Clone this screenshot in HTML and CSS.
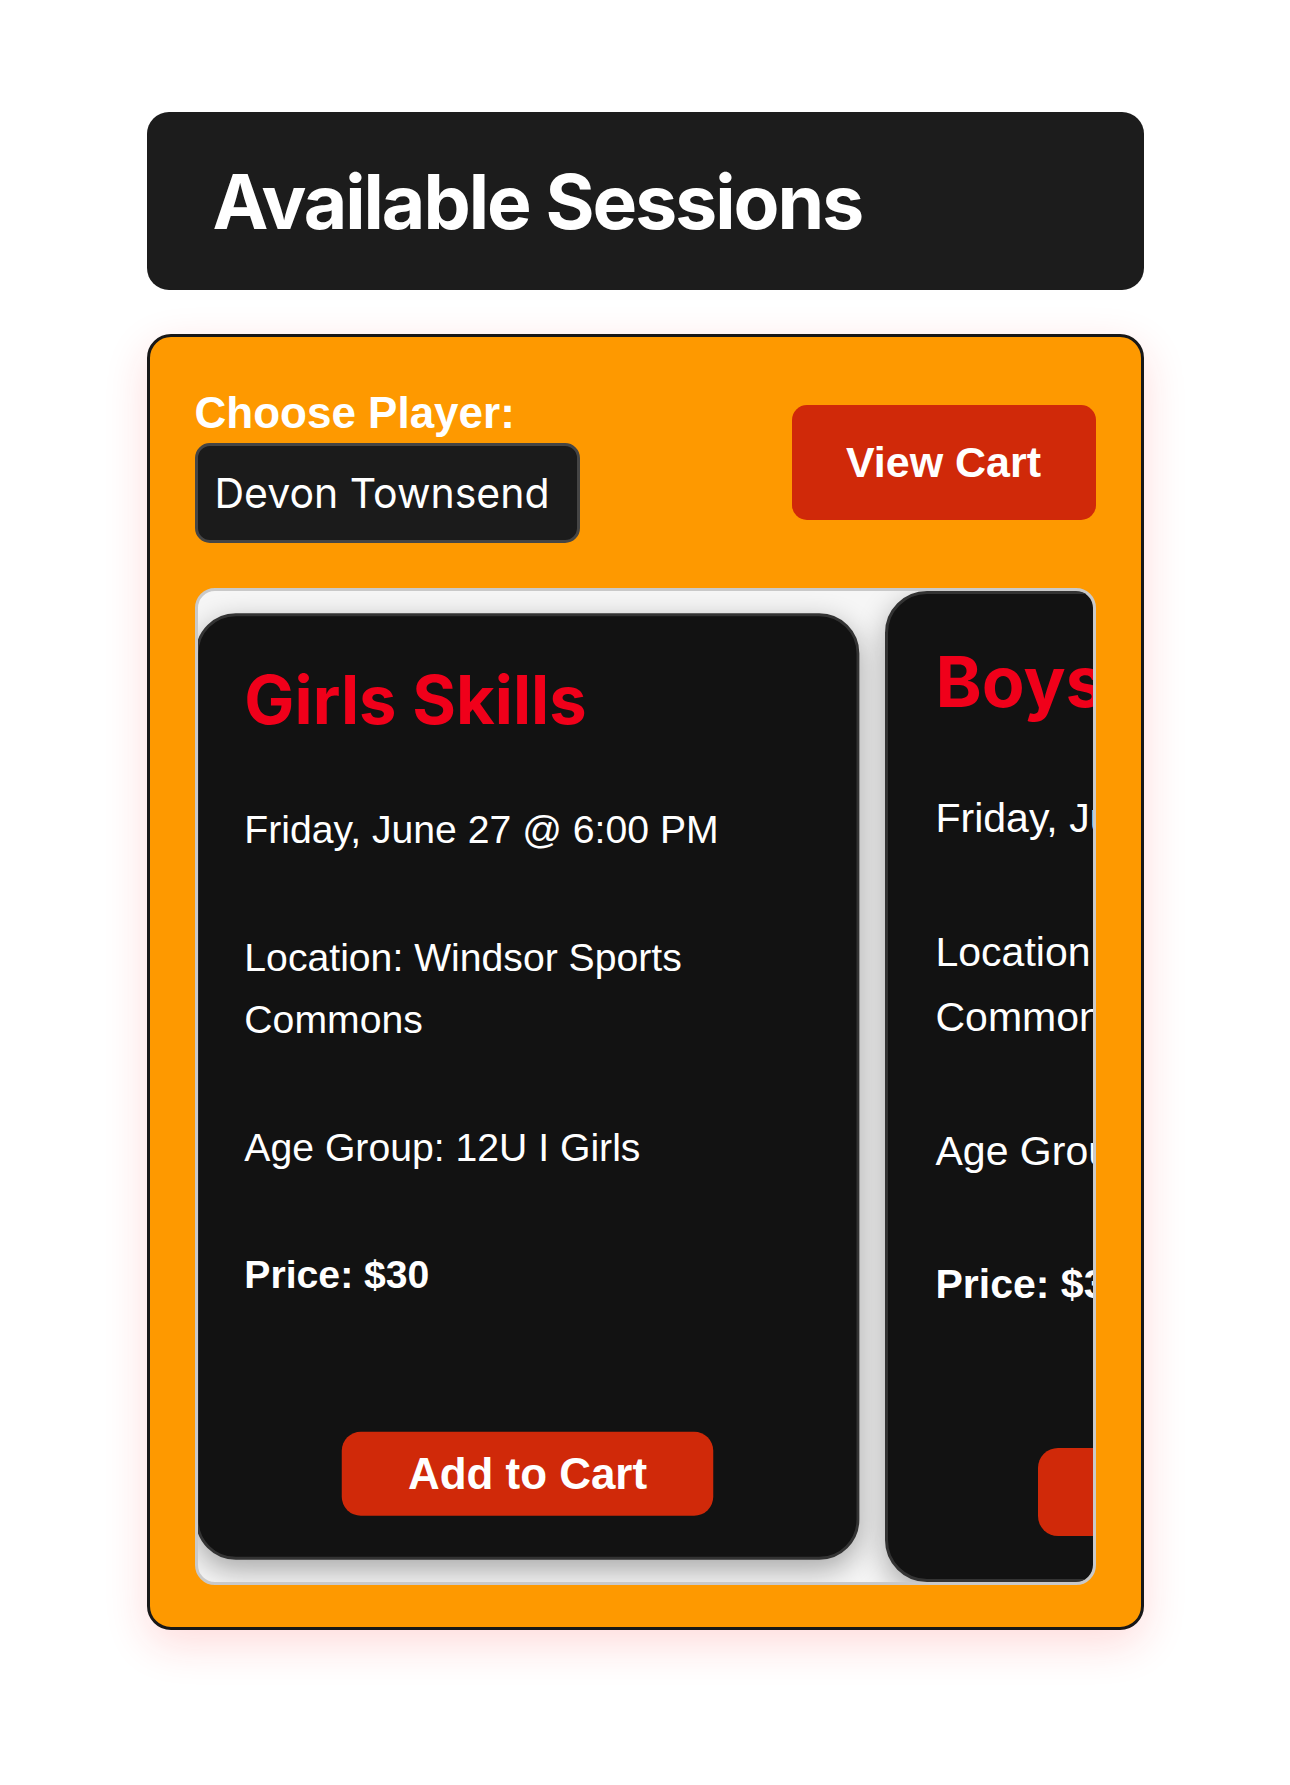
FILE: index.html
```html
<!DOCTYPE html>
<html lang="en">
<head>
<meta charset="utf-8">
<title>Available Sessions</title>
<link rel="stylesheet" href="styles.css">
</head>
<body>
<div class="page">
  <header class="banner">
    <h1>Available Sessions</h1>
  </header>

  <section class="panel">
    <div class="toolbar">
      <div class="player">
        <label for="player">Choose Player:</label>
        <select id="player" class="player-select">
          <option>Devon Townsend</option>
        </select>
      </div>
      <button class="view-cart">View Cart</button>
    </div>

    <div class="carousel">
      <div class="track">
        <article class="card is-side">
          <h2>Girls Skills</h2>
          <p>Friday, June 27 @ 6:00 PM</p>
          <p>Location: Windsor Sports Commons</p>
          <p>Age Group: 12U I Girls</p>
          <p class="price">Price: $30</p>
          <button class="add-btn">Add to Cart</button>
        </article>
        <article class="card">
          <h2>Boys Skills</h2>
          <p>Friday, June 27 @ 6:00 PM</p>
          <p>Location: Windsor Sports Commons</p>
          <p>Age Group: 12U I Boys</p>
          <p class="price">Price: $30</p>
          <button class="add-btn">Add to Cart</button>
        </article>
      </div>
    </div>
  </section>
</div>
</body>
</html>
```

FILE: styles.css
```css
* {
  box-sizing: border-box;
}

body {
  margin: 0;
  background: #ffffff;
  font-family: "Liberation Sans", Arial, sans-serif;
  color: #ffffff;
}

.page {
  width: 997px;
  margin: 0 auto;
  padding-top: 112px;
  padding-bottom: 120px;
}

/* Header */
.banner {
  height: 178px;
  display: flex;
  align-items: center;
  padding: 0 66px;
  background: #1c1c1c;
  border-radius: 22px;
}

.banner h1 {
  margin: 0;
  font-family: Inter, "Liberation Sans", sans-serif;
  font-weight: 700;
  font-size: 75px;
  line-height: 1;
  letter-spacing: -2px;
  color: #ffffff;
}

/* Orange panel */
.panel {
  margin-top: 44px;
  padding: 51px 45px 42px;
  background: #fe9900;
  border: 3px solid #181818;
  border-radius: 24px;
  box-shadow: 0 14px 44px rgba(255, 30, 30, 0.16);
}

.toolbar {
  display: flex;
  justify-content: space-between;
  align-items: center;
  margin-bottom: 45px;
}

.player label {
  display: block;
  margin-bottom: 5px;
  font-family: "Liberation Sans", Arial, sans-serif;
  font-weight: 700;
  font-size: 44px;
  color: #ffffff;
}

.player-select {
  -webkit-appearance: none;
  appearance: none;
  display: block;
  width: 385px;
  height: 100px;
  padding: 0 17px;
  background: #1b1b1b;
  color: #ffffff;
  border: 3px solid #454545;
  border-radius: 15px;
  font-family: Inter, "Noto Sans", sans-serif;
  font-size: 41px;
  outline: none;
}

.view-cart {
  width: 304px;
  height: 115px;
  margin-bottom: 6px;
  background: #d02909;
  color: #ffffff;
  border: none;
  border-radius: 15px;
  font-family: "Liberation Sans", Arial, sans-serif;
  font-weight: 700;
  font-size: 43px;
}

/* Carousel */
.carousel {
  height: 997px;
  background: #f6f6f6;
  border: 3px solid #c9c9c9;
  border-radius: 20px;
  overflow: hidden;
}

.track {
  display: flex;
  gap: 10px;
  height: 100%;
  margin-left: -18px;
}

.card {
  flex: 0 0 695px;
  display: flex;
  flex-direction: column;
  padding: 46px 48px 43px;
  background: #121212;
  border: 3px solid #333333;
  border-radius: 42px;
  box-shadow: 0 10px 30px rgba(0, 0, 0, 0.32);
}

.card.is-side {
  transform: scale(0.955);
}

.card h2 {
  margin: 0 0 62px;
  font-family: Inter, "Liberation Sans", sans-serif;
  font-weight: 700;
  font-size: 70px;
  line-height: 84px;
  color: #f0001a;
  white-space: nowrap;
}

.card p {
  margin: 0;
  font-size: 41px;
  line-height: 1.6;
  color: #ffffff;
}

.card p + p {
  margin-top: 68px;
}

.card .price {
  font-weight: 700;
}

.add-btn {
  margin-top: auto;
  align-self: center;
  flex: 0 0 auto;
  width: 389px;
  height: 88px;
  background: #d02909;
  color: #ffffff;
  border: none;
  border-radius: 20px;
  font-family: "Liberation Sans", Arial, sans-serif;
  font-weight: 700;
  font-size: 46px;
}
```
